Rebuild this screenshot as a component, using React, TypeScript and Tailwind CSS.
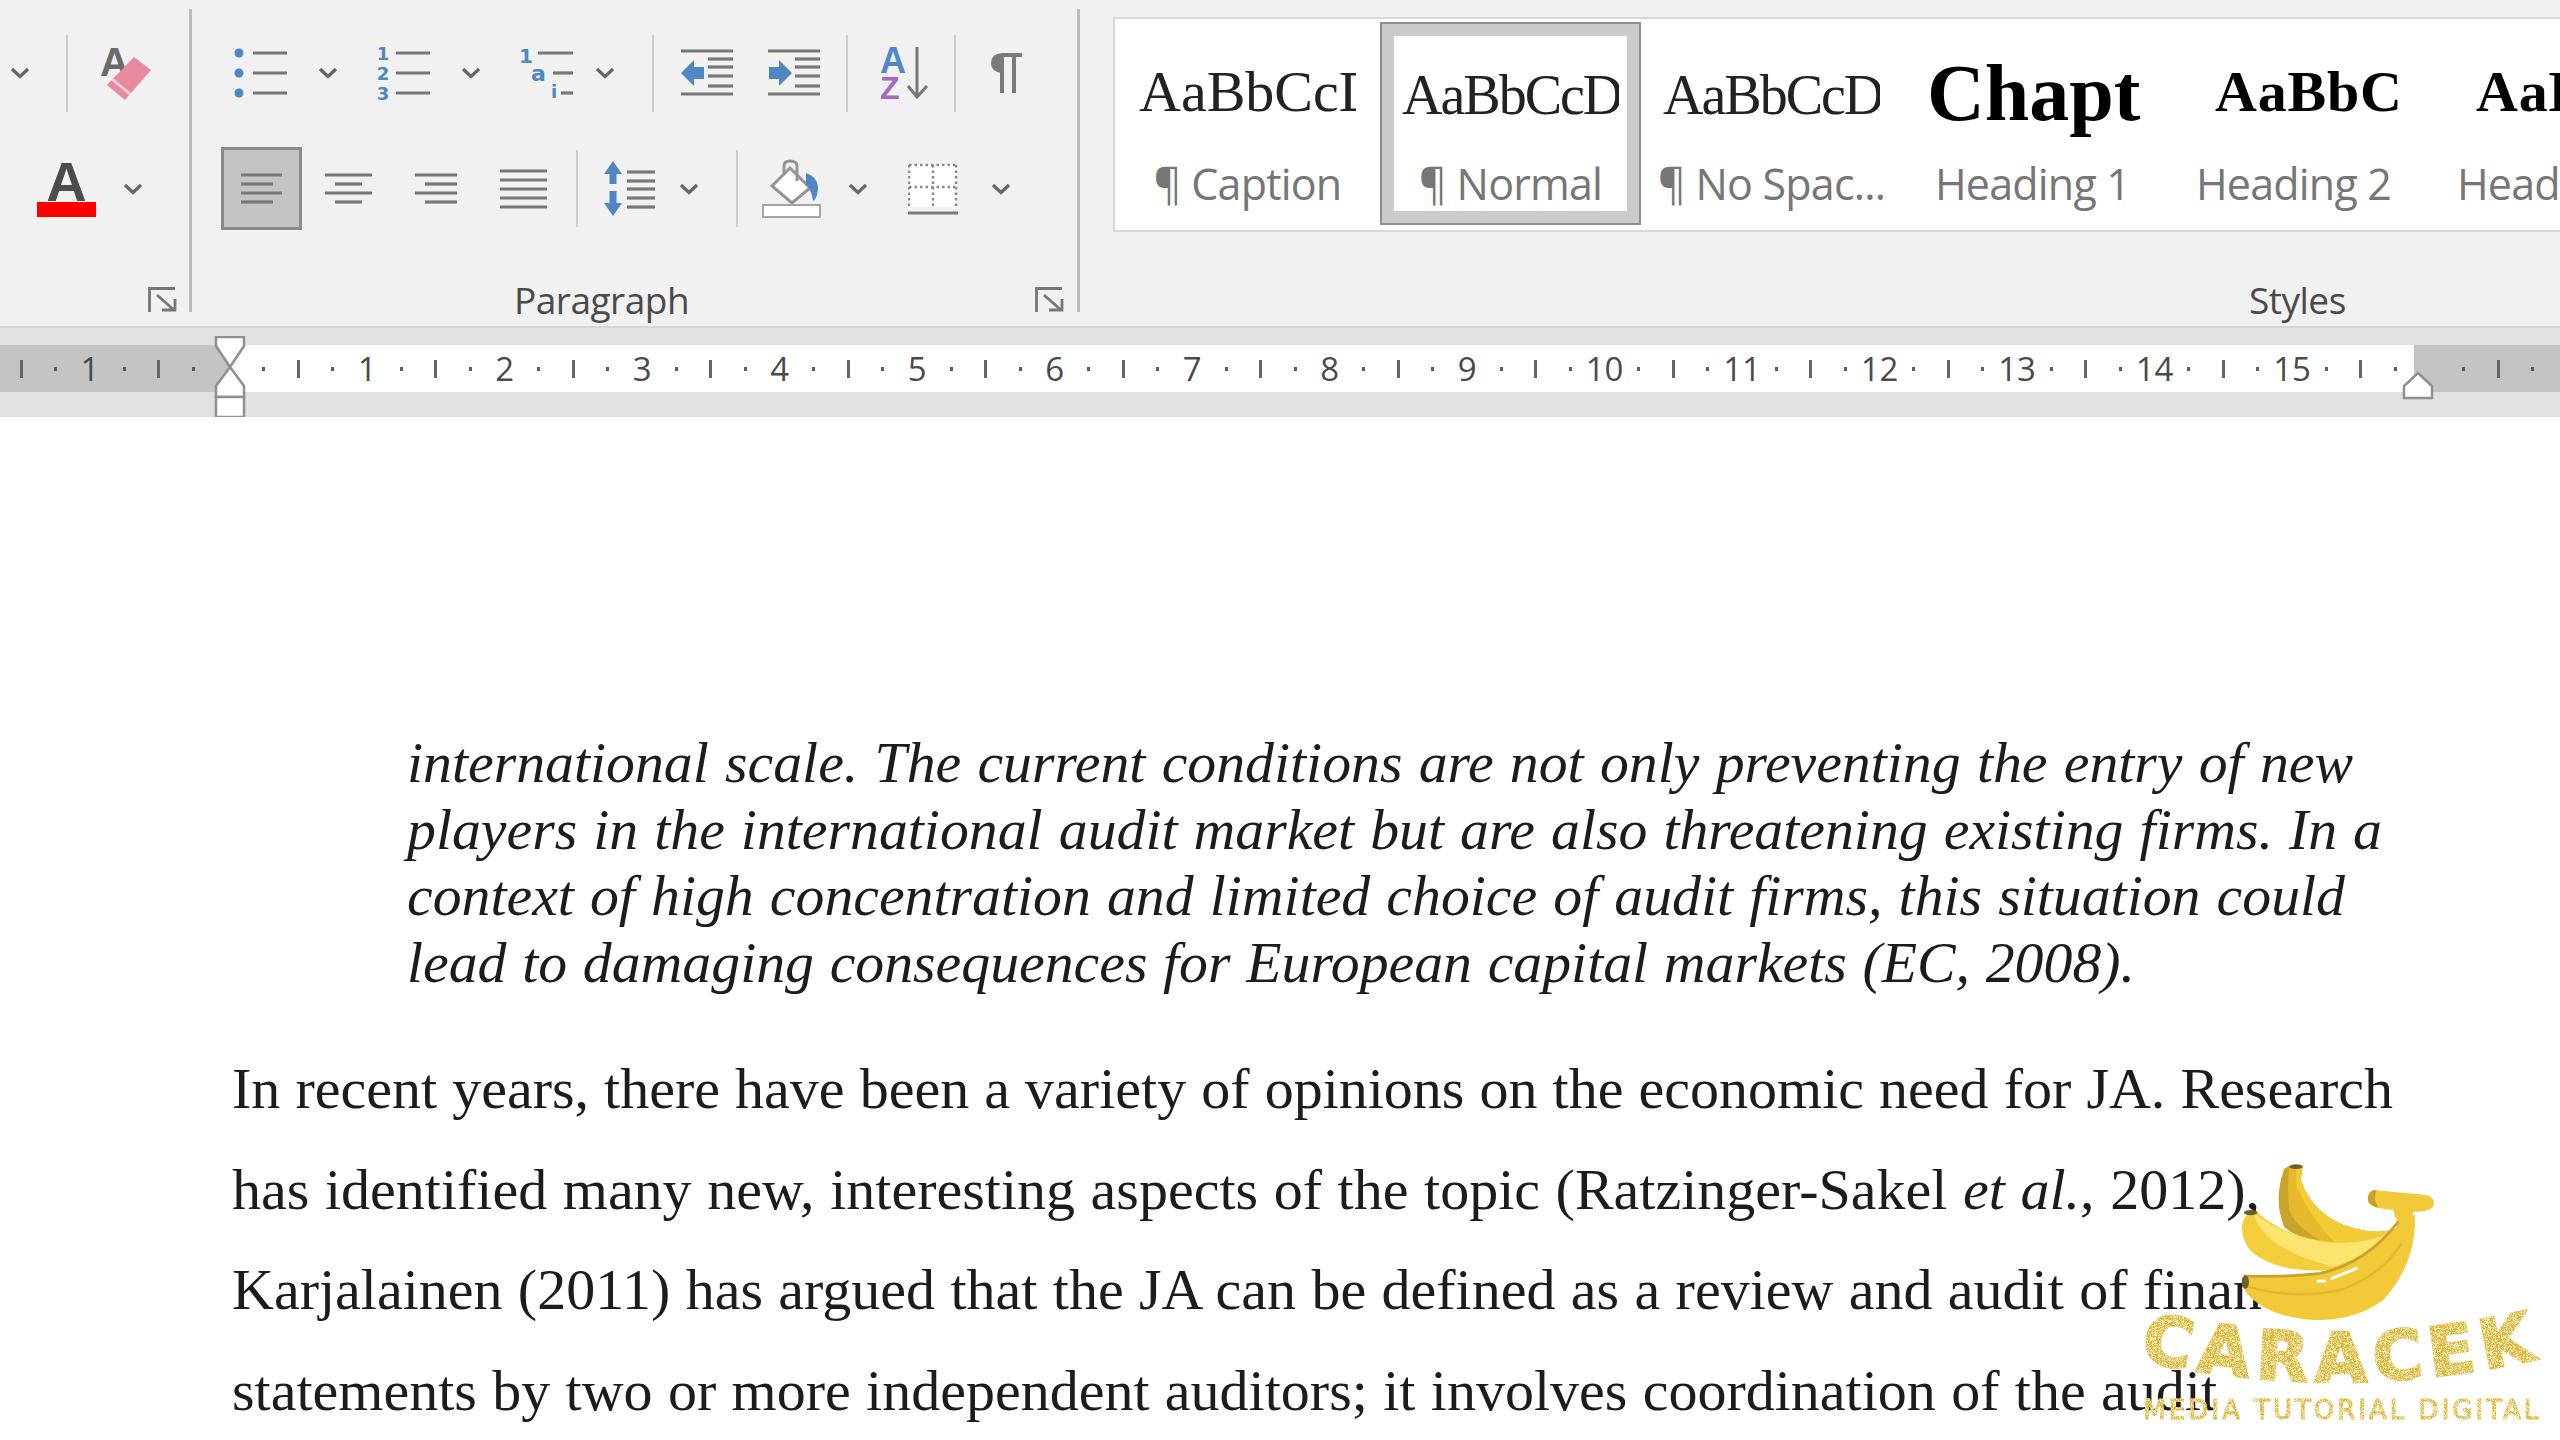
import React from "react";

const LINE = "#787878";
const BLUE = "#4f87c2";

function Chev() {
  return (
    <svg width="20" height="12" viewBox="0 0 20 12" className="shrink-0">
      <path d="M2 2 L10 9.5 L18 2" fill="none" stroke="#666" strokeWidth="3.2" />
    </svg>
  );
}
function Sep({ className }: { className: string }) {
  return <div className={"w-[2px] shrink-0 bg-[#cdcdcd] " + className} />;
}
function Lines({ ys, rows }: { ys: number[]; rows: [number, number][] }) {
  return (
    <g stroke={LINE} strokeWidth="3.2">
      {ys.map((y, i) => (
        <line key={i} x1={rows[i][0]} x2={rows[i][1]} y1={y} y2={y} />
      ))}
    </g>
  );
}
function Bullets() {
  return (
    <svg width="55" height="50" className="shrink-0">
      {[5, 25, 45].map((y) => (
        <circle key={y} cx="6" cy={y} r="4.5" fill={BLUE} />
      ))}
      <Lines ys={[5, 25, 45]} rows={[[20, 54], [20, 54], [20, 54]]} />
    </svg>
  );
}
function Numbered() {
  return (
    <svg width="55" height="50" className="shrink-0 overflow-visible">
      <g fill={BLUE} fontFamily="'DejaVu Sans', sans-serif" fontWeight="700" fontSize="18" textAnchor="middle">
        <text x="7" y="12">1</text>
        <text x="7" y="32">2</text>
        <text x="7" y="52">3</text>
      </g>
      <Lines ys={[5, 25, 45]} rows={[[20, 54], [20, 54], [20, 54]]} />
    </svg>
  );
}
function Multi() {
  return (
    <svg width="55" height="50" className="shrink-0 overflow-visible">
      <g fill={BLUE} fontFamily="'DejaVu Sans', sans-serif" fontWeight="700">
        <text x="1" y="15" fontSize="20">1</text>
        <text x="13" y="33" fontSize="22">a</text>
        <text x="33" y="50" fontSize="18">i</text>
      </g>
      <Lines ys={[5, 25, 45]} rows={[[20, 55], [35, 55], [43, 55]]} />
    </svg>
  );
}
function Indent({ right }: { right?: boolean }) {
  return (
    <svg width="52" height="48" className="shrink-0">
      <Lines
        ys={[2, 10, 18, 27, 37, 45]}
        rows={[[0, 52], [27, 52], [27, 52], [27, 52], [27, 52], [0, 52]]}
      />
      {right ? (
        <path d="M24 24 L11 11 L11 18 L1 18 L1 30 L11 30 L11 37Z" fill={BLUE} />
      ) : (
        <path d="M0 24 L13 11 L13 18 L23 18 L23 30 L13 30 L13 37Z" fill={BLUE} />
      )}
    </svg>
  );
}
function Sort() {
  return (
    <svg width="49" height="54" className="shrink-0 overflow-visible">
      <g fontFamily="'Liberation Sans', sans-serif" fontWeight="700">
        <text x="0" y="27" fontSize="36" fill="#4f87c9">A</text>
        <text x="0" y="53" fontSize="32" fill="#a566c4">Z</text>
      </g>
      <path d="M37 1 V50 M28 40 L37 51 L47 40" fill="none" stroke="#767676" strokeWidth="3" />
    </svg>
  );
}
function Pilcrow() {
  return (
    <svg width="32" height="42" className="shrink-0">
      <path d="M10 3 H31 M11 3 V41 M23 3 V41" fill="none" stroke="#7a7a7a" strokeWidth="4" />
      <path d="M11 1 Q0 2 0 11 Q0 20 11 21Z" fill="#7a7a7a" />
    </svg>
  );
}
function Align({ kind }: { kind: "l" | "c" | "r" }) {
  const rows: Record<string, [number, number][]> = {
    l: [[0, 41], [0, 32], [0, 41], [0, 32]],
    c: [[0, 47], [10, 37], [0, 47], [10, 37]],
    r: [[0, 42], [10, 42], [0, 42], [10, 42]],
  };
  const w = kind === "c" ? 47 : 42;
  return (
    <svg width={w} height="32" className="shrink-0">
      <Lines ys={[2, 11, 20, 29]} rows={rows[kind]} />
    </svg>
  );
}
function Justify() {
  return (
    <svg width="47" height="40" className="shrink-0">
      <Lines ys={[2, 11, 20, 29, 38]} rows={[[0, 47], [0, 47], [0, 47], [0, 47], [0, 47]]} />
    </svg>
  );
}
function LineSpacing() {
  return (
    <svg width="51" height="55" className="shrink-0">
      <path d="M9 0 L18 13 L12.5 13 L12.5 23 L5.5 23 L5.5 13 L0 13Z M9 55 L18 42 L12.5 42 L12.5 30 L5.5 30 L5.5 42 L0 42Z" fill={BLUE} />
      <Lines ys={[11, 20, 28, 37, 46]} rows={[[23, 51], [23, 51], [23, 51], [23, 51], [23, 51]]} />
    </svg>
  );
}
function Fill() {
  return (
    <svg width="60" height="60" className="shrink-0">
      <path d="M10 27 L28 9 L48 29 L30 44Z" fill="#fff" stroke="#959595" strokeWidth="3" />
      <path d="M22 16 V7 Q22 2 28 2 Q35 2 35 7 V22" fill="none" stroke="#959595" strokeWidth="3" />
      <path d="M44 14 Q56 18 56 30 Q55 40 51 42 Q50 32 44 25Z" fill={BLUE} />
      <rect x="1" y="46" width="57" height="12" fill="#fff" stroke="#a5a5a5" strokeWidth="2" />
    </svg>
  );
}
function Borders() {
  return (
    <svg width="50" height="52" className="shrink-0">
      <rect x="1" y="2" width="47" height="42" fill="#fff" />
      <g stroke="#8a8a8a" strokeWidth="2.5" strokeDasharray="2.5 3" fill="none">
        <path d="M1 2 H49 M1 2 V44 M48 2 V44 M25 2 V44 M1 24 H49" />
      </g>
      <line x1="0" x2="50" y1="50" y2="50" stroke="#7a7a7a" strokeWidth="3" />
    </svg>
  );
}
function Eraser() {
  return (
    <svg width="52" height="56" className="shrink-0 overflow-visible">
      <text x="0" y="31" fontFamily="'Liberation Sans', sans-serif" fontWeight="700" fontSize="40" fill="#6a6a6a">A</text>
      <path d="M34 12 L51 25 L25 55 L7 40Z" fill="#e88a9d" />
      <line x1="12" y1="34" x2="30" y2="49" stroke="#f6d5dc" strokeWidth="2.5" />
    </svg>
  );
}
function FontColor() {
  return (
    <svg width="59" height="58" className="shrink-0 overflow-visible">
      <text x="29.5" y="41" textAnchor="middle" fontFamily="'Liberation Sans', sans-serif" fontWeight="700" fontSize="56" fill="#4c4c4c">A</text>
      <rect x="0" y="42" width="59" height="15" fill="#f00" />
    </svg>
  );
}
function Launcher() {
  return (
    <svg width="29" height="26" className="shrink-0">
      <path d="M1.5 25 V1.5 H27 M9 8 L26 23 M14 23 H27 V12" fill="none" stroke="#777" strokeWidth="2.8" />
    </svg>
  );
}

const LABEL = "text-[37px] leading-[36px] text-[#4a4a4a] tracking-[-0.5px] font-['Open_Sans',sans-serif]";

function Style({
  label,
  children,
  selected,
  w,
}: {
  label: string;
  children: React.ReactNode;
  selected?: boolean;
  w: string;
}) {
  return (
    <div className={"relative shrink-0 flex flex-col items-center " + w}>
      {selected && (
        <div className="absolute inset-x-0 top-[3px] bottom-[5px] border-2 border-[#8f8f8f]">
          <div className="h-full border-[12px] border-[#cbcbcb]" />
        </div>
      )}
      <div className="h-[143px] w-[217px]">{children}</div>
      <div className="h-[44px] leading-[44px] whitespace-nowrap text-[43px] tracking-[-0.8px] text-[#767676] font-['Open_Sans',sans-serif]">
        {label}
      </div>
    </div>
  );
}

const PREVIEW = "overflow-hidden whitespace-nowrap leading-[80px] h-[84px] text-[#222] font-['Liberation_Serif',serif] ";

type Mark = { t: "d" | "l" | "e" } | { t: "n"; v: number };
function buildMarks() {
  const left: Mark[] = [{ t: "l" }, { t: "d" }, { t: "n", v: 1 }, { t: "d" }, { t: "l" }, { t: "d" }];
  const right: Mark[] = [];
  for (let i = 1; i <= 15; i++) {
    right.push({ t: "d" }, { t: "l" }, { t: "d" }, { t: "n", v: i });
  }
  right.push({ t: "d" }, { t: "l" }, { t: "d" }, { t: "e" }, { t: "d" }, { t: "l" }, { t: "d" }, { t: "n", v: 1 });
  return { left, right };
}
function MarkCell({ m }: { m: Mark }) {
  return (
    <div className="w-[34.375px] shrink-0 flex items-center justify-center h-full overflow-visible">
      {m.t === "d" && <div className="w-[3px] h-[4px] bg-[#5c5c5c]" />}
      {m.t === "l" && <div className="w-[3px] h-[18px] bg-[#666]" />}
      {m.t === "n" && (
        <span className="text-[33px] leading-none text-[#4a4a4a] whitespace-nowrap font-['Open_Sans',sans-serif]">{m.v}</span>
      )}
    </div>
  );
}
function Ruler() {
  const { left, right } = buildMarks();
  return (
    <div className="relative h-[89px] bg-[#e1e1e1] pt-[17px] overflow-hidden">
      <div className="relative h-[47px] bg-white">
        <div className="absolute left-0 top-0 bottom-0 w-[230px] bg-[#c4c4c4]" />
        <div className="absolute left-[2414px] right-0 top-0 bottom-0 bg-[#c4c4c4]" />
        <div className="relative flex h-full pl-[4px] w-[2700px]">
          {left.map((m, i) => (
            <MarkCell key={"l" + i} m={m} />
          ))}
          <div className="w-[36.5px] shrink-0" />
          {right.map((m, i) => (
            <MarkCell key={"r" + i} m={m} />
          ))}
        </div>
      </div>
      <svg width="34" height="84" className="absolute left-[213px] top-[8px]">
        <path d="M3 1 H31 V10 L17 31 L3 10Z M17 31 L31 50 V61 H3 V50Z" fill="#fff" stroke="#8f8f8f" strokeWidth="2.5" />
        <rect x="3" y="61" width="28" height="20" fill="#fff" stroke="#8f8f8f" strokeWidth="2.5" />
      </svg>
      <svg width="34" height="30" className="absolute left-[2401px] top-[43px]">
        <path d="M17 2 L31 15 V27 H3 V15Z" fill="#fff" stroke="#8f8f8f" strokeWidth="2.5" />
      </svg>
    </div>
  );
}

const J = "[text-align-last:justify]";

function Watermark() {
  return (
    <svg width="480" height="310" viewBox="0 0 1440 930" className="absolute left-[2080px] top-[1130px]">
      <defs>
        <filter id="sp" x="0" y="0" width="100%" height="100%">
          <feTurbulence type="fractalNoise" baseFrequency="0.55" numOctaves="2" seed="3" result="n" />
          <feColorMatrix in="n" type="matrix" values="0 0 0 0 0.93  0 0 0 0 0.82  0 0 0 0 0.4  0 0 0 -7 3.9" result="m" />
          <feComposite in="m" in2="SourceGraphic" operator="in" result="s" />
          <feMerge>
            <feMergeNode in="SourceGraphic" />
            <feMergeNode in="s" />
          </feMerge>
        </filter>
        <path id="arc" d="M178 690 Q790 825 1400 680" />
      </defs>
      <g filter="url(#sp)" fill="#d9b53a" stroke="#d9b53a" fontFamily="'DejaVu Sans', sans-serif" fontWeight="700">
        <text fontSize="205" letterSpacing="21" strokeWidth="7">
          <textPath href="#arc">CARACEK</textPath>
        </text>
        <text x="190" y="866" fontSize="78" fontWeight="400" strokeWidth="3" textLength="1185" lengthAdjust="spacing">
          MEDIA TUTORIAL DIGITAL
        </text>
      </g>
      <path d="M612 118 Q630 100 668 108 L662 150 Q700 260 820 295 Q880 312 940 300 L900 345 L760 350 Q640 320 612 290 Q580 210 612 118Z" fill="#c9a42a" />
      <path d="M628 112 L668 108 L662 150 Q700 260 820 295 Q880 312 940 300 L900 340 L750 345 Q650 300 628 240 Q620 170 628 112Z" fill="#e6ba2c" />
      <path d="M648 110 L668 108 L662 150 Q700 260 820 295 Q880 312 940 300 L900 335 L770 345 Q690 260 650 170Z" fill="#f3cb35" />
      <ellipse cx="648" cy="110" rx="20" ry="7" fill="#6d5f2a" />
      <path d="M486 290 Q488 250 530 245 Q610 320 750 335 Q860 345 945 295 L960 340 Q880 410 740 420 Q600 430 520 370 Q486 340 486 290Z" fill="#f4cd3b" />
      <path d="M520 248 Q610 320 750 338 Q860 345 935 305 Q870 375 760 410 Q640 380 575 330 Q530 290 520 248Z" fill="#fbe56f" />
      <ellipse cx="512" cy="248" rx="20" ry="8" fill="#6d5f2a" />
      <path d="M490 440 Q620 440 720 430 Q860 400 950 290 L950 260 L1005 255 Q1010 400 910 510 Q820 575 700 570 Q560 560 500 490 Q480 460 490 440Z" fill="#f2c939" />
      <path d="M492 438 Q620 442 720 430 Q860 400 955 275" fill="none" stroke="#c9a227" strokeWidth="8" />
      <path d="M500 470 Q640 510 780 480 Q900 440 965 340" fill="none" stroke="#e4b82f" strokeWidth="7" />
      <path d="M714 454 L734 452 M756 445 L830 415" fill="none" stroke="#fff" strokeWidth="9" strokeLinecap="round" />
      <ellipse cx="496" cy="456" rx="11" ry="20" fill="#6d5f2a" />
      <path d="M880 180 L1040 195 Q1068 205 1060 230 Q1040 248 1000 245 L990 290 L945 260 L940 240 Q880 235 865 215 Q860 190 880 180Z" fill="#f2c939" />
      <path d="M880 180 Q860 190 865 215 Q872 228 895 234 Q878 205 890 181Z" fill="#c9a227" />
    </svg>
  );
}

export default function App() {
  return (
    <div className="relative w-[2560px] h-[1440px] overflow-hidden bg-white">
      <div className="blur-[0.7px]">
        <div className="flex h-[328px] bg-[#f1f1f1] border-b-2 border-[#d6d6d6]">
          <div className="w-[189px] shrink-0 pt-[31px] flex flex-col">
            <div className="flex items-center h-[84px]">
              <div className="ml-[10px]"><Chev /></div>
              <Sep className="ml-[36px] h-[77px]" />
              <div className="ml-[32px]"><Eraser /></div>
            </div>
            <div className="flex items-center h-[83px] mt-[32px]">
              <div className="ml-[37px]"><FontColor /></div>
              <div className="ml-[27px]"><Chev /></div>
            </div>
            <div className="flex items-center justify-end h-[36px] mt-[52px] pr-[12px]">
              <Launcher />
            </div>
          </div>
          <div className="w-[3px] shrink-0 mt-[9px] h-[303px] bg-[#bcbcbc]" />
          <div className="w-[885px] shrink-0 pt-[31px] flex flex-col">
            <div className="flex items-center h-[84px]">
              <div className="ml-[41px]"><Bullets /></div>
              <div className="ml-[30px]"><Chev /></div>
              <div className="ml-[38px]"><Numbered /></div>
              <div className="ml-[30px]"><Chev /></div>
              <div className="ml-[37px]"><Multi /></div>
              <div className="ml-[22px]"><Chev /></div>
              <Sep className="ml-[37px] h-[77px]" />
              <div className="ml-[27px]"><Indent /></div>
              <div className="ml-[35px]"><Indent right /></div>
              <Sep className="ml-[26px] h-[77px]" />
              <div className="ml-[32px]"><Sort /></div>
              <Sep className="ml-[25px] h-[77px]" />
              <div className="ml-[35px]"><Pilcrow /></div>
            </div>
            <div className="flex items-center h-[83px] mt-[32px]">
              <div className="ml-[29px] w-[81px] h-[83px] shrink-0 bg-[#c4c4c4] border-[3px] border-[#8a8a8a] flex items-center justify-center">
                <Align kind="l" />
              </div>
              <div className="ml-[23px]"><Align kind="c" /></div>
              <div className="ml-[43px]"><Align kind="r" /></div>
              <div className="ml-[43px]"><Justify /></div>
              <Sep className="ml-[29px] h-[77px]" />
              <div className="ml-[26px]"><LineSpacing /></div>
              <div className="ml-[24px]"><Chev /></div>
              <Sep className="ml-[37px] h-[77px]" />
              <div className="ml-[24px]"><Fill /></div>
              <div className="ml-[26px]"><Chev /></div>
              <div className="ml-[40px]"><Borders /></div>
              <div className="ml-[33px]"><Chev /></div>
            </div>
            <div className="flex items-center h-[36px] mt-[52px]">
              <span className={"ml-[322px] " + LABEL}>Paragraph</span>
              <div className="ml-auto mr-[13px]"><Launcher /></div>
            </div>
          </div>
          <div className="w-[3px] shrink-0 mt-[9px] h-[303px] bg-[#bcbcbc]" />
          <div className="flex-1 min-w-0 pt-[17px] pl-[33px] overflow-hidden flex flex-col">
            <div className="flex h-[215px] w-[1600px] shrink-0 bg-white border-2 border-[#d8d8d8]">
              <Style w="w-[265px]" label="¶ Caption">
                <div className={PREVIEW + "mt-[33px] text-[58px]"}>AaBbCcDd</div>
              </Style>
              <Style w="w-[261px]" label="¶ Normal" selected>
                <div className={PREVIEW + "mt-[36px] text-[56px] tracking-[-2px]"}>AaBbCcD</div>
              </Style>
              <Style w="w-[261px]" label="¶ No Spac...">
                <div className={PREVIEW + "mt-[36px] text-[56px] tracking-[-2px]"}>AaBbCcD</div>
              </Style>
              <Style w="w-[261px]" label="Heading 1">
                <div className={PREVIEW + "mt-[34px] pl-[3px] text-[80px] font-bold !text-black"}>Chapter</div>
              </Style>
              <Style w="w-[261px]" label="Heading 2">
                <div className={PREVIEW + "mt-[33px] pl-[30px] text-[58px] tracking-[0.8px] font-bold !text-black"}>AaBbCcDd</div>
              </Style>
              <Style w="w-[261px]" label="Heading 3">
                <div className={PREVIEW + "mt-[33px] pl-[30px] text-[58px] tracking-[0.8px] font-bold !text-black"}>AaBbCcDd</div>
              </Style>
            </div>
            <div className={"mt-[50px] ml-[1136px] whitespace-nowrap " + LABEL}>Styles</div>
          </div>
        </div>
        <Ruler />
        <div className="font-['Liberation_Serif',serif] text-[#1c1c1c]">
          <div className="pt-[313px] pl-[407px] text-[57.8px] leading-[66.7px] italic">
            <div className={"w-[1946px] " + J}>international scale. The current conditions are not only preventing the entry of new</div>
            <div className={"w-[1975px] " + J}>players in the international audit market but are also threatening existing firms. In a</div>
            <div className={"w-[1938px] " + J}>context of high concentration and limited choice of audit firms, this situation could</div>
            <div className={"w-[1728px] " + J}>lead to damaging consequences for European capital markets (EC, 2008).</div>
          </div>
          <div className="mt-[42px] pl-[232px] text-[58px] leading-[100.7px]">
            <div className={"w-[2161px] " + J}>In recent years, there have been a variety of opinions on the economic need for JA. Research</div>
            <div className={"w-[2028px] " + J}>has identified many new, interesting aspects of the topic (Ratzinger-Sakel <i>et al.</i>, 2012),</div>
            <div className={"w-[2030px] " + J}>Karjalainen (2011) has argued that the JA can be defined as a review and audit of finan</div>
            <div className={"w-[1985px] " + J}>statements by two or more independent auditors; it involves coordination of the audit</div>
          </div>
        </div>
      </div>
      <Watermark />
    </div>
  );
}
